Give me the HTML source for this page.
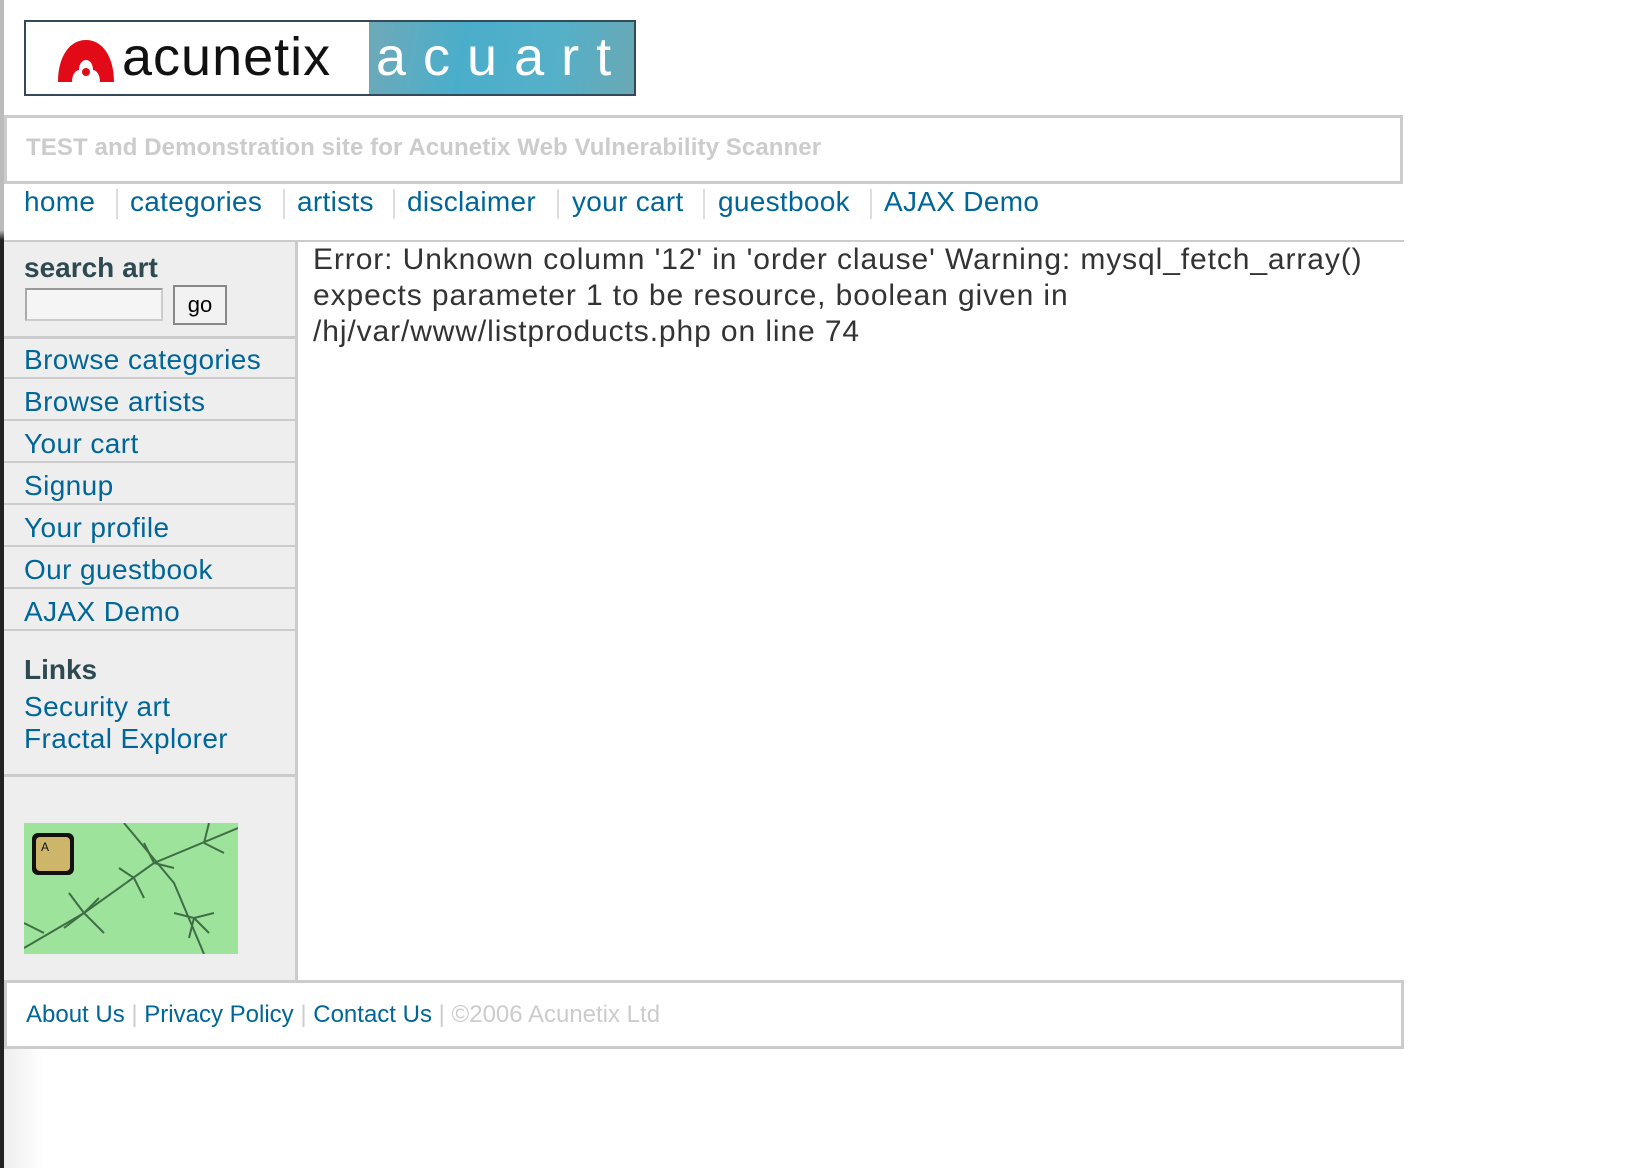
<!DOCTYPE html>
<html><head><meta charset="utf-8">
<style>
*{margin:0;padding:0;box-sizing:border-box}
body{width:1634px;height:1168px;background:#fff;font-family:"Liberation Sans",Arial,sans-serif;position:relative;overflow:hidden}
.a{position:absolute;white-space:nowrap}
a{color:#006699;text-decoration:none}
.nav{font-size:28px;top:186px;letter-spacing:0.3px}
.sep{position:absolute;width:2px;background:#ddd;top:189px;height:30px}
.side{position:absolute;left:4px;width:293px;background:#eee}
.item{position:absolute;left:4px;width:293px;height:40px;border-bottom:2px solid #ccc}
.item a{position:absolute;left:20px;top:5px;font-size:28px;letter-spacing:0.4px}
</style></head><body>
<div class="a" style="left:0;top:0;width:4px;height:1168px;background:linear-gradient(#bbb 0,#bbb 230px,#222 240px,#222 1168px)"></div>
<div class="a" style="left:4px;top:1049px;width:40px;height:119px;background:linear-gradient(90deg,#eee,#fff)"></div>

<!-- logo -->
<div class="a" style="left:24px;top:20px;width:612px;height:76px;border:2px solid #34495a;background:#fff;overflow:hidden">
  <svg class="a" style="left:28px;top:14px" width="64" height="48" viewBox="0 0 64 48"><path d="M4 46 C4 20 16 4 32 4 C48 4 60 20 60 46 L46 46 C46 38 42 34 39 34 C39 28 36 24 32 24 C28 24 25 28 25 34 C22 34 18 38 18 46 Z" fill="#e20a17"/><circle cx="32" cy="34" r="7" fill="#fff"/><circle cx="32" cy="36" r="4" fill="#e20a17"/></svg>
  <div class="a" style="left:96px;top:4px;font-size:54px;color:#111;letter-spacing:1px">acunetix</div>
  <div class="a" style="left:343px;top:0;width:267px;height:72px;background:linear-gradient(100deg,#6fa9b8 0%,#4aaecb 35%,#55b0c8 70%,#6aa8b4 100%)"></div>
  <div class="a" style="left:350px;top:4px;font-size:54px;color:#fff;letter-spacing:17px">acuart</div>
</div>

<!-- header box -->
<div class="a" style="left:4px;top:115px;width:1399px;height:69px;border:3px solid #ccc"></div>
<div class="a" style="left:26px;top:134px;font-size:24px;font-weight:bold;color:#ccc;letter-spacing:0.1px">TEST and Demonstration site for Acunetix Web Vulnerability Scanner</div>

<!-- nav -->
<a class="a nav" style="left:24px">home</a>
<span class="sep" style="left:116px"></span>
<a class="a nav" style="left:130px">categories</a>
<span class="sep" style="left:283px"></span>
<a class="a nav" style="left:297px">artists</a>
<span class="sep" style="left:393px"></span>
<a class="a nav" style="left:407px">disclaimer</a>
<span class="sep" style="left:557px"></span>
<a class="a nav" style="left:572px">your cart</a>
<span class="sep" style="left:703px"></span>
<a class="a nav" style="left:718px">guestbook</a>
<span class="sep" style="left:870px"></span>
<a class="a nav" style="left:884px">AJAX Demo</a>
<div class="a" style="left:4px;top:240px;width:1400px;height:2px;background:#ccc"></div>

<!-- sidebar -->
<div class="side" style="top:242px;height:738px"></div>
<div class="a" style="left:295px;top:242px;width:3px;height:738px;background:#ccc"></div>
<div class="a" style="left:24px;top:252px;font-size:28px;font-weight:bold;color:#2e4a50">search art</div>
<div class="a" style="left:25px;top:288px;width:138px;height:33px;border:2px solid #ccc;border-top-color:#999;border-left-color:#aaa;background:#f5f5f5"></div>
<div class="a" style="left:173px;top:285px;width:54px;height:40px;border:2px solid #888;background:#f2f2f2;font-size:22px;text-align:center;line-height:35px;color:#000">go</div>
<div class="a" style="left:4px;top:336px;width:293px;height:3px;background:#ccc"></div>
<div class="item" style="top:339px"><a>Browse categories</a></div>
<div class="item" style="top:381px"><a>Browse artists</a></div>
<div class="item" style="top:423px"><a>Your cart</a></div>
<div class="item" style="top:465px"><a>Signup</a></div>
<div class="item" style="top:507px"><a>Your profile</a></div>
<div class="item" style="top:549px"><a>Our guestbook</a></div>
<div class="item" style="top:591px"><a>AJAX Demo</a></div>
<div class="a" style="left:24px;top:654px;font-size:28px;font-weight:bold;color:#2e4a50">Links</div>
<a class="a" style="left:24px;top:691px;font-size:28px;letter-spacing:0.4px">Security art</a>
<a class="a" style="left:24px;top:723px;font-size:28px;letter-spacing:0.4px">Fractal Explorer</a>
<div class="a" style="left:4px;top:774px;width:293px;height:3px;background:#ccc"></div>
<svg class="a" style="left:24px;top:823px" width="214" height="131" viewBox="0 0 214 131">
<rect width="214" height="131" fill="#9ee39c"/>
<g stroke="#2f5a37" stroke-width="2" fill="none" opacity=".85">
<path d="M0 125 L60 90 L130 40 L214 5"/><path d="M100 0 L150 60 L180 131"/>
<path d="M20 110 L0 100 M60 90 L45 70 M60 90 L80 110 M60 90 L75 75 M60 90 L40 105"/>
<path d="M130 40 L120 20 M130 40 L150 45 M110 55 L95 45 M110 55 L120 75"/>
<path d="M170 95 L150 90 M170 95 L190 90 M170 95 L165 115 M170 95 L185 110"/>
<path d="M180 20 L185 0 M180 20 L200 30"/>
</g>
<rect x="8" y="10" width="42" height="42" rx="6" fill="#111"/>
<rect x="12" y="14" width="34" height="34" rx="4" fill="#cdb66a"/>
<text x="17" y="28" font-size="12" font-family="Liberation Sans" fill="#111">A</text>
</svg>

<!-- content -->
<div class="a" style="left:313px;top:242px;font-size:30px;line-height:36px;color:#333;letter-spacing:0.9px">Error: Unknown column '12' in 'order clause' Warning: mysql_fetch_array()<br>expects parameter 1 to be resource, boolean given in<br>/hj/var/www/listproducts.php on line 74</div>

<!-- footer -->
<div class="a" style="left:4px;top:980px;width:1400px;height:69px;border:3px solid #ccc"></div>
<div class="a" style="left:26px;top:1001px;font-size:24px;color:#ccc"><a>About Us</a> | <a>Privacy Policy</a> | <a>Contact Us</a> | ©2006 Acunetix Ltd</div>
</body></html>
